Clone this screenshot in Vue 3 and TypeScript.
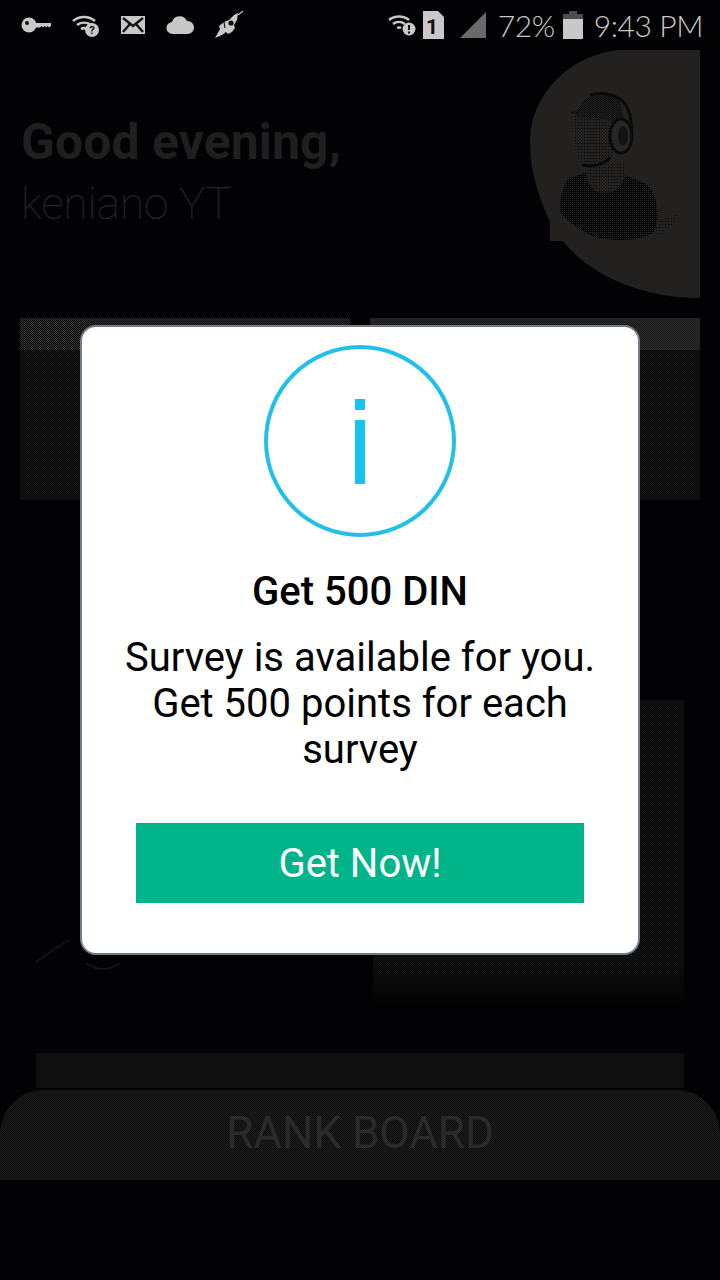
<script setup lang="ts">
const greeting = 'Good evening,';
const userName = 'keniano YT';
</script>

<template>
  <div class="screen">
    <div class="status-bar">
      <div class="status-left">
        <svg class="ic" width="30" height="20" viewBox="0 0 30 20">
          <circle cx="8" cy="10" r="7.5" fill="#c8c8c8" />
          <circle cx="6" cy="8" r="2" fill="#111" />
          <path d="M14 8h16v3l-2 1.5-1.5-1.5-1.5 1.5-1.5-1.5-1.5 1.5-1.5-1.5-1.5 1.5H14z" fill="#c8c8c8" />
        </svg>
        <svg class="ic" width="28" height="26" viewBox="0 0 28 26">
          <path d="M1 9a17 17 0 0 1 22 0M5 13a12 12 0 0 1 14 0M9 17a6 6 0 0 1 6 0" fill="none" stroke="#c8c8c8" stroke-width="2.6" />
          <circle cx="20" cy="18" r="7" fill="#c8c8c8" />
          <text x="20" y="22" font-size="11" font-weight="700" text-anchor="middle" fill="#111" font-family="Roboto, sans-serif">?</text>
        </svg>
        <svg class="ic" width="24" height="18" viewBox="0 0 24 18">
          <rect width="24" height="18" fill="#c8c8c8" />
          <path d="M2 2l10 8 10-8M2 16l7-8M22 16l-7-8" fill="none" stroke="#111" stroke-width="2.4" />
        </svg>
        <svg class="ic" width="28" height="20" viewBox="0 0 28 20">
          <path d="M7 19a6 6 0 0 1-1-12 8 8 0 0 1 15-1 6.5 6.5 0 0 1 1 13z" fill="#c8c8c8" />
        </svg>
        <svg class="ic" width="28" height="30" viewBox="0 0 28 30">
          <path d="M0 28l5-9-1-3 5-4 5-2 5-5 4-2-1 7-3 5 1 3-3 4-4 2-2-2-4 3z" fill="#c8c8c8" />
          <path d="M23 5l5-4" stroke="#c8c8c8" stroke-width="1.3" />
          <circle cx="16" cy="13" r="2.6" fill="#111" />
          <path d="M9 12l1 6" stroke="#111" stroke-width="1.2" />
        </svg>
      </div>
      <div class="status-right">
        <svg class="ic wifi-alert" width="28" height="22" viewBox="0 0 28 22">
          <path d="M1 6a16 16 0 0 1 20 0M5 10a10 10 0 0 1 12 0M9 14a5 5 0 0 1 4 0" fill="none" stroke="#c8c8c8" stroke-width="2.4" />
          <circle cx="21" cy="15" r="6.5" fill="#c8c8c8" />
          <path d="M21 11v5M21 17.5v2" stroke="#111" stroke-width="2" />
        </svg>
        <svg class="ic sim" width="21" height="28" viewBox="0 0 21 28">
          <path d="M0 0h15l6 6v22H0z" fill="#c8c8c8" />
          <text x="9" y="23" font-size="21" font-weight="700" text-anchor="middle" fill="#111" font-family="Roboto, sans-serif">1</text>
        </svg>
        <svg class="ic signal" width="26" height="26" viewBox="0 0 26 26">
          <path d="M0 26L26 0v26z" fill="#6a6a6a" />
        </svg>
        <span class="battery-pct">72%</span>
        <svg class="ic battery" width="20" height="28" viewBox="0 0 20 28">
          <path d="M6 0h8v3h6v25H0V3h6z" fill="#4c4c4c" />
          <rect y="8" width="20" height="20" fill="#c8c8c8" />
        </svg>
        <span class="clock">9:43 PM</span>
      </div>
    </div>

    <div class="home">
      <div class="hero">
        <div class="hero-text">
          <div class="greet">{{ greeting }}</div>
          <div class="user">{{ userName }}</div>
        </div>
        <svg class="avatar" width="170" height="248" viewBox="0 0 170 248">
          <defs>
            <pattern id="dots-dark" width="2" height="2" patternUnits="userSpaceOnUse">
              <rect width="2" height="2" fill="#070707" />
              <rect width="1" height="1" fill="#2a2a2a" />
            </pattern>
            <pattern id="dots-mid" width="2" height="2" patternUnits="userSpaceOnUse">
              <rect width="2" height="2" fill="#222120" />
              <rect width="1" height="1" fill="#050505" />
              <rect x="1" y="1" width="1" height="1" fill="#111" />
            </pattern>
            <pattern id="dots-light" width="3" height="3" patternUnits="userSpaceOnUse">
              <rect width="3" height="3" fill="#222120" />
              <rect width="1" height="1" fill="#060606" />
            </pattern>
          </defs>
          <path d="M170 0H88C38 6 0 45 0 93c0 30 10 57 20 79v19h13c25 32 75 57 137 57z" fill="#222120" />
          <path d="M128 170c12-2 20-6 22-8-2 8-10 18-26 24z" fill="url(#dots-light)" />
          <path d="M30 153c2-12 4-20 10-25l17-6 36 3c16 4 28 10 30 18 5 10 7 28 0 40-10 6-22 7-33 7-14 0-28-2-33-7-12-6-22-14-27-21z" fill="url(#dots-dark)" />
          <path d="M57 112c-2 12 0 24 8 29 8 4 18 3 24-4 5-6 7-14 6-25z" fill="url(#dots-light)" />
          <path d="M43 66c-1 16 0 34 9 49l28-2c6-8 6-28 4-44L68 60z" fill="url(#dots-light)" />
          <path d="M40 63c8-3 10-6 12-10 6-8 20-12 30-9l8 5 4 24-5 9c-2-6-4-10-8-11-6-2-16-4-24-2-6-2-12-5-17-6z" fill="url(#dots-mid)" />
          <path d="M60 45c14-4 32 0 38 14 4 10 4 20 3 30" fill="none" stroke="#0a0a0a" stroke-width="3" />
          <ellipse cx="91" cy="86" rx="11" ry="17" fill="#262626" stroke="#0a0a0a" stroke-width="3" />
          <ellipse cx="93" cy="86" rx="5" ry="10" fill="#131313" />
          <path d="M52 115c10 2 22 0 28-8" fill="none" stroke="#050505" stroke-width="2.4" />
        </svg>
      </div>

      <div class="tiles">
        <div class="tile"><div class="tile-top"></div></div>
        <div class="tile"><div class="tile-top tile-top-solid"></div></div>
      </div>

      <div class="feature">
        <div class="feature-img">
          <svg class="feature-mark" width="90" height="40" viewBox="0 0 90 40">
            <path d="M0 27L32 5" stroke="#141414" stroke-width="3" stroke-dasharray="2 1" />
            <path d="M50 28c10 8 24 8 34 0" fill="none" stroke="#141414" stroke-width="2" />
          </svg>
          <div class="feature-shade"></div>
        </div>
        <div class="feature-band"></div>
      </div>

      <div class="rank">RANK BOARD</div>
    </div>

    <div class="dialog">
      <div class="info-ring"><span class="info-dot"></span><span class="info-stem"></span></div>
      <div class="dialog-title">Get 500 DIN</div>
      <p class="dialog-msg">Survey is available for you.<br />Get 500 points for each<br />survey</p>
      <button class="dialog-btn">Get Now!</button>
    </div>
  </div>
</template>

<style scoped>
.screen {
  position: relative;
  width: 720px;
  height: 1280px;
  background: #020204;
  overflow: hidden;
  font-family: Roboto, "Liberation Sans", sans-serif;
}

.status-bar {
  height: 50px;
  display: flex;
  justify-content: space-between;
  align-items: center;
  padding: 0 17px 0 21px;
  color: #c8c8c8;
}

.status-left,
.status-right {
  display: flex;
  align-items: center;
}

.status-left {
  gap: 21px;
}

.ic {
  display: block;
}

.sim {
  margin-left: 7px;
}

.signal {
  margin-left: 16px;
}

.battery-pct {
  margin-left: 12px;
}

.battery {
  margin-left: 8px;
}

.clock {
  margin-left: 11px;
}

.battery-pct,
.clock {
  font-family: Lato, sans-serif;
  font-size: 30px;
  font-weight: 300;
  letter-spacing: -0.4px;
}

.home {
  display: flex;
  flex-direction: column;
}

.hero {
  display: flex;
  justify-content: space-between;
  height: 268px;
  padding: 0 20px 0 21px;
}

.hero-text {
  padding-top: 64px;
}

.greet {
  font-size: 50px;
  font-weight: 700;
  line-height: 56px;
  color: #1f1f1f;
}

.user {
  margin-top: 6px;
  font-size: 44px;
  font-weight: 100;
  line-height: 56px;
  color: #262626;
}

.avatar {
  display: block;
}

.tiles {
  display: grid;
  grid-template-columns: 330px 330px;
  gap: 20px;
  padding: 0 20px;
}

.tile {
  height: 182px;
  background: repeating-conic-gradient(#181818 0 25%, #060606 0 50%) 0 0 / 2px 2px;
}

.tile-top {
  height: 32px;
  background: repeating-conic-gradient(#303030 0 25%, #0b0b0b 0 50%) 0 0 / 2px 2px;
}

.tile-top-solid {
  background: repeating-conic-gradient(#2c2c2c 0 25%, #1a1a1a 0 50%) 0 0 / 2px 2px;
}

.feature {
  margin: 200px 36px 0;
  display: flex;
  flex-direction: column;
  gap: 40px;
}

.feature-img {
  position: relative;
  height: 313px;
}

.feature-mark {
  position: absolute;
  left: 0;
  bottom: 38px;
}

.feature-shade {
  height: 100%;
  margin-left: 52%;
  background: repeating-conic-gradient(#181818 0 25%, #050505 0 50%) 0 0 / 2px 2px;
  -webkit-mask-image: linear-gradient(#000 82%, transparent);
  mask-image: linear-gradient(#000 82%, transparent);
}

.feature-band {
  height: 35px;
  background: repeating-conic-gradient(#191919 0 25%, #050505 0 50%) 0 0 / 2px 2px;
}

.rank {
  margin-top: 2px;
  height: 90px;
  border-radius: 44px 44px 0 0;
  background: repeating-conic-gradient(#1e1e1e 0 25%, #0c0c0c 0 50%) 0 0 / 2px 2px;
  color: #2a2a2a;
  font-size: 44px;
  line-height: 86px;
  text-align: center;
}

.dialog {
  position: absolute;
  left: 80px;
  top: 325px;
  width: 560px;
  height: 630px;
  box-sizing: border-box;
  padding-top: 18px;
  border: 2px solid #6f7f88;
  border-radius: 16px;
  background: #fff;
  display: flex;
  flex-direction: column;
  align-items: center;
  color: #000;
}

.info-ring {
  width: 192px;
  height: 192px;
  box-sizing: border-box;
  border: 4px solid #22c0e8;
  border-radius: 50%;
  display: flex;
  flex-direction: column;
  align-items: center;
  padding-top: 50px;
}

.info-dot {
  width: 10px;
  height: 11px;
  background: #18c3ee;
}

.info-stem {
  width: 10px;
  height: 64px;
  margin-top: 10px;
  background: #18c3ee;
}

.dialog-title {
  margin-top: 32px;
  font-size: 40px;
  font-weight: 500;
  line-height: 46px;
}

.dialog-msg {
  margin: 20px 0 0;
  font-size: 40px;
  line-height: 46px;
  text-align: center;
}

.dialog-btn {
  margin-top: 50px;
  width: 448px;
  height: 80px;
  border: 0;
  background: #00b48a;
  color: #fff;
  font-family: inherit;
  font-size: 40px;
}
</style>
